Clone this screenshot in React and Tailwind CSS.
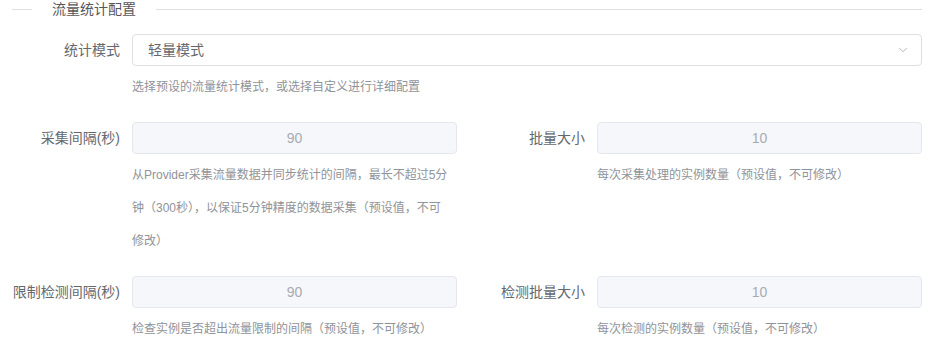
import React from 'react';
import { ChevronDown } from 'lucide-react';

const font = { fontFamily: '"Liberation Sans", "Noto Sans CJK SC", sans-serif' };

function FormItem({ label, children, help }) {
  return (
    <div className="flex mb-[18px]">
      <label className="w-[120px] shrink-0 pr-[12px] text-right text-[14px] leading-[32px] text-[#66686d] whitespace-nowrap">
        {label}
      </label>
      <div className="flex-1 min-w-0">
        {children}
        {help && (
          <div className="mt-[5px] text-[12px] leading-[33px] text-[#909399]">{help}</div>
        )}
      </div>
    </div>
  );
}

function DisabledInput({ value }) {
  return (
    <div className="h-[32px] rounded-[4px] border border-[#e4e7ed] bg-[#f5f7fa] flex items-center justify-center text-[14px] text-[#a8abb2]">
      {value}
    </div>
  );
}

export default function App() {
  return (
    <div className="w-[932px] h-[355px] overflow-hidden bg-white pl-[12px] pr-[10px]" style={font}>
      {/* section divider */}
      <div className="flex items-center h-[18px] mb-[16px]">
        <div className="w-[20px] h-px bg-[#dcdfe6]" />
        <span className="px-[20px] text-[14px] text-[#55575c] whitespace-nowrap">流量统计配置</span>
        <div className="flex-1 h-px bg-[#dcdfe6]" />
      </div>

      <FormItem label="统计模式" help="选择预设的流量统计模式，或选择自定义进行详细配置">
        <div className="h-[32px] rounded-[4px] border border-[#dcdfe6] bg-white flex items-center justify-between pl-[15px] pr-[11px]">
          <span className="text-[14px] text-[#66686d]">轻量模式</span>
          <ChevronDown size={14} strokeWidth={1.5} className="text-[#a8abb2]" />
        </div>
      </FormItem>

      <div className="grid grid-cols-2 gap-x-5">
        <FormItem
          label="采集间隔(秒)"
          help={
            <>
              <span className="block whitespace-nowrap">从Provider采集流量数据并同步统计的间隔，最长不超过5分</span>
              <span className="block whitespace-nowrap">钟（300秒），以保证5分钟精度的数据采集（预设值，不可</span>
              <span className="block whitespace-nowrap">修改）</span>
            </>
          }
        >
          <DisabledInput value="90" />
        </FormItem>
        <FormItem label="批量大小" help="每次采集处理的实例数量（预设值，不可修改）">
          <DisabledInput value="10" />
        </FormItem>

        <FormItem label="限制检测间隔(秒)" help="检查实例是否超出流量限制的间隔（预设值，不可修改）">
          <DisabledInput value="90" />
        </FormItem>
        <FormItem label="检测批量大小" help="每次检测的实例数量（预设值，不可修改）">
          <DisabledInput value="10" />
        </FormItem>
      </div>
    </div>
  );
}
